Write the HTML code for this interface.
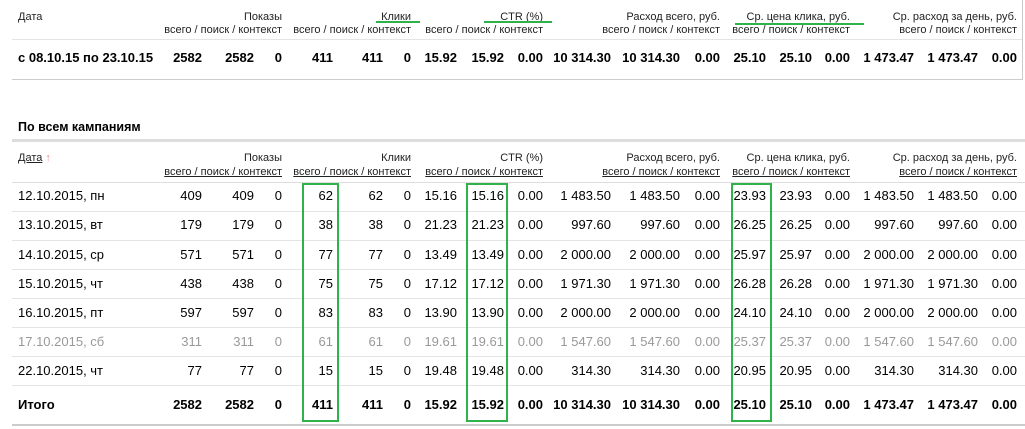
<!DOCTYPE html>
<html><head><meta charset="utf-8"><style>
body{margin:0;width:1025px;height:429px;background:#fff;font-family:"Liberation Sans",Arial,sans-serif;color:#000;position:relative;overflow:hidden}
.r{position:absolute;left:0;width:1025px;height:16px}
.r span{position:absolute;white-space:nowrap;text-align:right}
.h{font-size:11px;color:#222}
.d{font-size:13px}
.b{font-weight:bold}
.g{color:#999}
.l{position:absolute;height:1px;background:#e4e4e4}
.c1{right:823px}.c2{right:771px}.c3{right:743px}.c4{right:692px}.c5{right:642px}.c6{right:614px}
.c7{right:568px}.c8{right:521px}.c9{right:482px}.c10{right:414px}.c11{right:345px}.c12{right:305px}
.c13{right:259px}.c14{right:213px}.c15{right:175px}.c16{right:111px}.c17{right:47px}.c18{right:8px}
.p1{right:743px}.p2{right:614px}.p3{right:482px}.p4{right:305px}.p5{right:175px}.p6{right:8px}
.u{text-decoration:underline}
.gb{position:absolute;border:2px solid #2fb24a;top:183px;height:235px}
.gu{position:absolute;height:2px;background:#2fb24a}
.f{left:18px}
</style></head><body>
<div class="r h" style="top:11px"><span class="f">Дата</span><span class="p1">Показы</span><span class="p2">Клики</span><span class="p3">CTR (%)</span><span class="p4">Расход всего, руб.</span><span class="p5">Ср. цена клика, руб.</span><span class="p6">Ср. расход за день, руб.</span></div>
<div class="r h" style="top:24px"><span class="p1">всего / поиск / контекст</span><span class="p2">всего / поиск / контекст</span><span class="p3">всего / поиск / контекст</span><span class="p4">всего / поиск / контекст</span><span class="p5">всего / поиск / контекст</span><span class="p6">всего / поиск / контекст</span></div>
<div class="gu" style="left:376px;top:21px;width:44px"></div>
<div class="gu" style="left:484px;top:21px;width:68px"></div>
<div class="gu" style="left:735px;top:23px;width:129px"></div>
<div class="l" style="left:12px;top:39px;width:1010px"></div>
<div class="l" style="left:1022px;top:0;width:1px;height:80px;background:#ccc"></div>
<div class="r d b" style="top:50px"><span class="f">с 08.10.15 по 23.10.15</span><span class="c1">2582</span><span class="c2">2582</span><span class="c3">0</span><span class="c4">411</span><span class="c5">411</span><span class="c6">0</span><span class="c7">15.92</span><span class="c8">15.92</span><span class="c9">0.00</span><span class="c10">10 314.30</span><span class="c11">10 314.30</span><span class="c12">0.00</span><span class="c13">25.10</span><span class="c14">25.10</span><span class="c15">0.00</span><span class="c16">1 473.47</span><span class="c17">1 473.47</span><span class="c18">0.00</span></div>
<div class="l" style="left:12px;top:79px;width:1010px;background:#ccc"></div>
<div class="r d b" style="top:120px;font-size:12.5px"><span class="f">По всем кампаниям</span></div>
<div class="l" style="left:12px;top:139px;width:1013px;height:3px;background:#ddd"></div>
<div class="r h" style="top:152px"><span class="f"><span class="u" style="position:static">Дата</span> <span style="position:static;color:#e88">↑</span></span><span class="p1">Показы</span><span class="p2">Клики</span><span class="p3">CTR (%)</span><span class="p4">Расход всего, руб.</span><span class="p5">Ср. цена клика, руб.</span><span class="p6">Ср. расход за день, руб.</span></div>
<div class="r h" style="top:166px"><span class="p1 u">всего / поиск / контекст</span><span class="p2 u">всего / поиск / контекст</span><span class="p3 u">всего / поиск / контекст</span><span class="p4 u">всего / поиск / контекст</span><span class="p5 u">всего / поиск / контекст</span><span class="p6 u">всего / поиск / контекст</span></div>
<div class="l" style="left:12px;top:182px;width:1013px;background:#ddd"></div>

<div class="r d" style="top:188px"><span class="f">12.10.2015, пн</span><span class="c1">409</span><span class="c2">409</span><span class="c3">0</span><span class="c4">62</span><span class="c5">62</span><span class="c6">0</span><span class="c7">15.16</span><span class="c8">15.16</span><span class="c9">0.00</span><span class="c10">1 483.50</span><span class="c11">1 483.50</span><span class="c12">0.00</span><span class="c13">23.93</span><span class="c14">23.93</span><span class="c15">0.00</span><span class="c16">1 483.50</span><span class="c17">1 483.50</span><span class="c18">0.00</span></div>
<div class="l" style="left:12px;top:211px;width:1013px"></div>
<div class="r d" style="top:217px"><span class="f">13.10.2015, вт</span><span class="c1">179</span><span class="c2">179</span><span class="c3">0</span><span class="c4">38</span><span class="c5">38</span><span class="c6">0</span><span class="c7">21.23</span><span class="c8">21.23</span><span class="c9">0.00</span><span class="c10">997.60</span><span class="c11">997.60</span><span class="c12">0.00</span><span class="c13">26.25</span><span class="c14">26.25</span><span class="c15">0.00</span><span class="c16">997.60</span><span class="c17">997.60</span><span class="c18">0.00</span></div>
<div class="l" style="left:12px;top:240px;width:1013px"></div>
<div class="r d" style="top:247px"><span class="f">14.10.2015, ср</span><span class="c1">571</span><span class="c2">571</span><span class="c3">0</span><span class="c4">77</span><span class="c5">77</span><span class="c6">0</span><span class="c7">13.49</span><span class="c8">13.49</span><span class="c9">0.00</span><span class="c10">2 000.00</span><span class="c11">2 000.00</span><span class="c12">0.00</span><span class="c13">25.97</span><span class="c14">25.97</span><span class="c15">0.00</span><span class="c16">2 000.00</span><span class="c17">2 000.00</span><span class="c18">0.00</span></div>
<div class="l" style="left:12px;top:269px;width:1013px"></div>
<div class="r d" style="top:276px"><span class="f">15.10.2015, чт</span><span class="c1">438</span><span class="c2">438</span><span class="c3">0</span><span class="c4">75</span><span class="c5">75</span><span class="c6">0</span><span class="c7">17.12</span><span class="c8">17.12</span><span class="c9">0.00</span><span class="c10">1 971.30</span><span class="c11">1 971.30</span><span class="c12">0.00</span><span class="c13">26.28</span><span class="c14">26.28</span><span class="c15">0.00</span><span class="c16">1 971.30</span><span class="c17">1 971.30</span><span class="c18">0.00</span></div>
<div class="l" style="left:12px;top:298px;width:1013px"></div>
<div class="r d" style="top:305px"><span class="f">16.10.2015, пт</span><span class="c1">597</span><span class="c2">597</span><span class="c3">0</span><span class="c4">83</span><span class="c5">83</span><span class="c6">0</span><span class="c7">13.90</span><span class="c8">13.90</span><span class="c9">0.00</span><span class="c10">2 000.00</span><span class="c11">2 000.00</span><span class="c12">0.00</span><span class="c13">24.10</span><span class="c14">24.10</span><span class="c15">0.00</span><span class="c16">2 000.00</span><span class="c17">2 000.00</span><span class="c18">0.00</span></div>
<div class="l" style="left:12px;top:327px;width:1013px"></div>
<div class="r d g" style="top:334px"><span class="f">17.10.2015, сб</span><span class="c1">311</span><span class="c2">311</span><span class="c3">0</span><span class="c4">61</span><span class="c5">61</span><span class="c6">0</span><span class="c7">19.61</span><span class="c8">19.61</span><span class="c9">0.00</span><span class="c10">1 547.60</span><span class="c11">1 547.60</span><span class="c12">0.00</span><span class="c13">25.37</span><span class="c14">25.37</span><span class="c15">0.00</span><span class="c16">1 547.60</span><span class="c17">1 547.60</span><span class="c18">0.00</span></div>
<div class="l" style="left:12px;top:356px;width:1013px"></div>
<div class="r d" style="top:363px"><span class="f">22.10.2015, чт</span><span class="c1">77</span><span class="c2">77</span><span class="c3">0</span><span class="c4">15</span><span class="c5">15</span><span class="c6">0</span><span class="c7">19.48</span><span class="c8">19.48</span><span class="c9">0.00</span><span class="c10">314.30</span><span class="c11">314.30</span><span class="c12">0.00</span><span class="c13">20.95</span><span class="c14">20.95</span><span class="c15">0.00</span><span class="c16">314.30</span><span class="c17">314.30</span><span class="c18">0.00</span></div>
<div class="l" style="left:12px;top:385px;width:1013px"></div>
<div class="r d b" style="top:397px"><span class="f">Итого</span><span class="c1">2582</span><span class="c2">2582</span><span class="c3">0</span><span class="c4">411</span><span class="c5">411</span><span class="c6">0</span><span class="c7">15.92</span><span class="c8">15.92</span><span class="c9">0.00</span><span class="c10">10 314.30</span><span class="c11">10 314.30</span><span class="c12">0.00</span><span class="c13">25.10</span><span class="c14">25.10</span><span class="c15">0.00</span><span class="c16">1 473.47</span><span class="c17">1 473.47</span><span class="c18">0.00</span></div>
<div class="l" style="left:12px;top:424px;width:1013px;height:2px;background:#ccc"></div>

<div class="gb" style="left:302px;width:33px"></div>
<div class="gb" style="left:466px;width:38px"></div>
<div class="gb" style="left:731px;width:37px"></div>
</body></html>
